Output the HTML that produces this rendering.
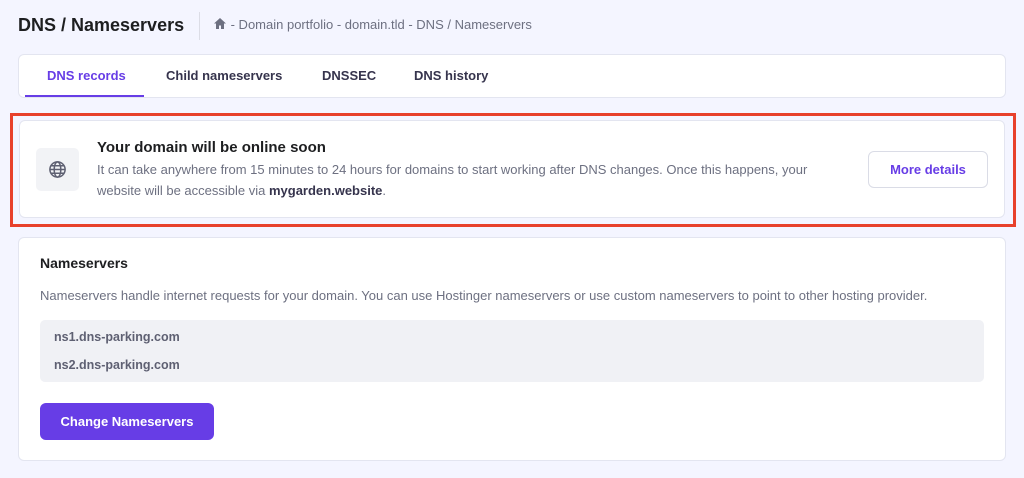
<!DOCTYPE html>
<html><head><meta charset="utf-8"><style>
*{box-sizing:border-box;margin:0;padding:0}
body{width:1024px;height:478px;background:#f4f5ff;font-family:"Liberation Sans",sans-serif;position:relative;overflow:hidden;color:#1d1e20}
.abs{position:absolute}
.card{position:absolute;background:#fff;border:1px solid #e3e5f0;border-radius:6px}
h1{position:absolute;left:18px;top:15px;font-size:18px;font-weight:bold;color:#1d1e20}
.sep{position:absolute;left:199px;top:12px;width:1px;height:28px;background:#dcdde6}
.bc{position:absolute;left:213px;top:17px;font-size:13px;color:#6d7081}
.tab{position:absolute;top:68px;font-size:13px;font-weight:bold;color:#36344d}
.red{position:absolute;left:10px;top:113px;width:1006px;height:114px;border:3px solid #e8412b}
.t{font-size:13px;color:#6d7081;line-height:21px}
</style></head><body>
<h1>DNS / Nameservers</h1>
<div class="sep"></div>
<div class="bc"><svg width="14" height="13" viewBox="0 0 14 13" style="vertical-align:-1px"><path d="M7 1L1 6.5h2V12h3V8.5h2V12h3V6.5h2z" fill="#6d7081"/></svg> - Domain portfolio - domain.tld - DNS / Nameservers</div>
<div class="card" style="left:18px;top:54px;width:988px;height:44px"></div>
<div class="tab" style="left:47px;color:#673de6">DNS records</div>
<div class="abs" style="left:25px;top:95px;width:119px;height:2px;background:#673de6"></div>
<div class="tab" style="left:166px">Child nameservers</div>
<div class="tab" style="left:322px">DNSSEC</div>
<div class="tab" style="left:414px">DNS history</div>
<div class="red"></div>
<div class="card" style="left:19px;top:120px;width:986px;height:98px"></div>
<div class="abs" style="left:36px;top:148px;width:43px;height:43px;background:#f2f3f6;border-radius:5px"></div>
<svg class="abs" style="left:48px;top:160px" width="19" height="19" viewBox="0 0 20 20" fill="none" stroke="#5e6072" stroke-width="1.6"><circle cx="10" cy="10" r="8"/><ellipse cx="10" cy="10" rx="3.5" ry="8"/><path d="M2 10h16M3 6h14M3 14h14"/></svg>
<div class="abs" style="left:97px;top:139px;font-size:15px;font-weight:bold">Your domain will be online soon</div>
<div class="abs t" style="left:97px;top:159px;width:715px">It can take anywhere from 15 minutes to 24 hours for domains to start working after DNS changes. Once this happens, your website will be accessible via <b style="color:#36344d">mygarden.website</b>.</div>
<div class="abs" style="left:868px;top:151px;width:120px;height:37px;border:1px solid #dadce6;border-radius:6px;font-size:13px;font-weight:bold;color:#673de6;text-align:center;line-height:35px">More details</div>
<div class="card" style="left:18px;top:237px;width:988px;height:224px"></div>
<div class="abs" style="left:40px;top:255px;font-size:14px;font-weight:bold">Nameservers</div>
<div class="abs t" style="left:40px;top:285px;white-space:nowrap">Nameservers handle internet requests for your domain. You can use Hostinger nameservers or use custom nameservers to point to other hosting provider.</div>
<div class="abs" style="left:40px;top:320px;width:944px;height:62px;background:#f0f1f5;border-radius:5px"></div>
<div class="abs" style="left:54px;top:330px;font-size:12.5px;font-weight:bold;color:#5e6072">ns1.dns-parking.com</div>
<div class="abs" style="left:54px;top:358px;font-size:12.5px;font-weight:bold;color:#5e6072">ns2.dns-parking.com</div>
<div class="abs" style="left:40px;top:403px;width:174px;height:37px;background:#673de6;border-radius:6px;color:#fff;font-size:13px;font-weight:bold;text-align:center;line-height:37px">Change Nameservers</div>
</body></html>
